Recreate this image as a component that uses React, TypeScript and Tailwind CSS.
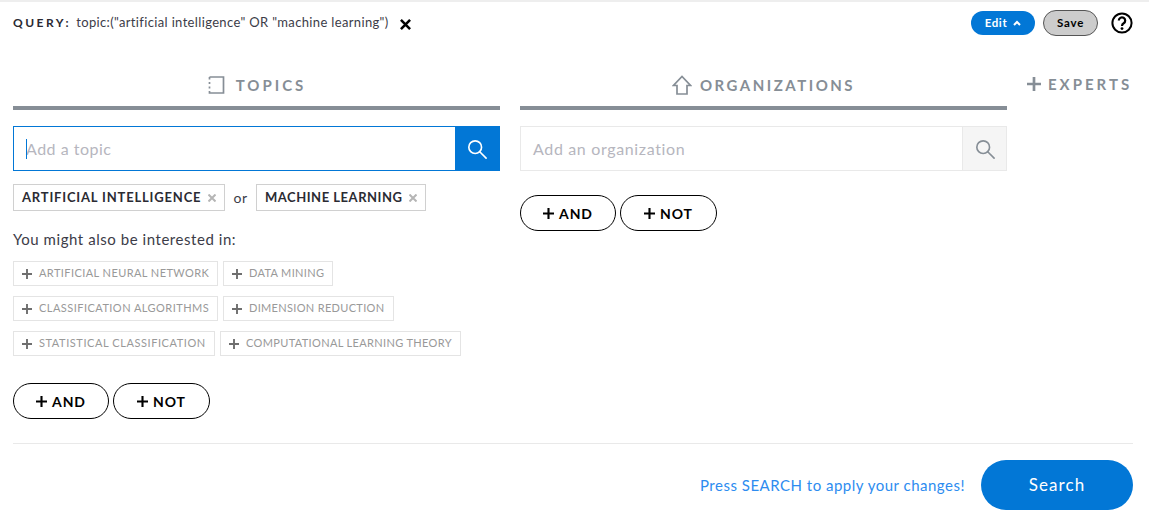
import React from "react";

const SearchIcon = ({ className }: { className: string }) => (
  <svg viewBox="0 0 22 22" className={className} fill="none" stroke="currentColor" strokeWidth="1.8">
    <circle cx="9" cy="9" r="7" />
    <path d="M14 14l7 7" strokeLinecap="round" />
  </svg>
);

const Plus = ({ className }: { className: string }) => (
  <svg viewBox="0 0 12 12" className={className} fill="none" stroke="currentColor" strokeWidth="2.3">
    <path d="M6 0v12M0 6h12" />
  </svg>
);

const Logic = ({ mt }: { mt: string }) => (
  <div className={`flex gap-1 ${mt}`}>
    {[["AND", "w-[96px]"], ["NOT", "w-[97px]"]].map(([t, w]) => (
      <button key={t} className={`${w} h-9 flex items-center justify-center gap-[5px] rounded-full border border-black text-[14px] font-bold tracking-[0.9px] text-black bg-white`}>
        <Plus className="w-[11px] h-[11px]" />
        {t}
      </button>
    ))}
  </div>
);

const Suggest = ({ label, w, track }: { label: string; w: string; track: string }) => (
  <span className={`${w} ${track} h-[25px] shrink-0 flex items-center border border-[#e4e4e4] pl-[8px] text-[11px] text-[#999] whitespace-nowrap`}>
    <Plus className="w-[10px] h-[10px] mr-[7px] text-[#6f6f6f] shrink-0" />
    {label}
  </span>
);

const Chip = ({ label, w, track }: { label: string; w: string; track: string }) => (
  <span className={`${w} ${track} h-[27px] flex items-center justify-between border border-[#d0d0d0] pl-2 pr-[8px] text-[13px] font-bold text-[#2b2b33] whitespace-nowrap`}>
    {label}
    <svg viewBox="0 0 8 8" className="w-2 h-2 text-[#b5b5b5]" fill="none" stroke="currentColor" strokeWidth="2">
      <path d="M0.5 0.5l7 7M7.500 0.5l-7 7" />
    </svg>
  </span>
);

export default function App() {
  return (
    <div className="w-[1149px] h-[524px] overflow-hidden bg-white border-t-2 border-[#eeeeee] pl-[13px] pr-[16px] font-['Lato','Source_Sans_Pro',sans-serif]">
      <div className="h-[42px] flex items-center justify-between">
        <div className="flex items-center">
          <span className="text-[12px] font-bold tracking-[2.5px] text-[#2a2a33] mr-[5px]">QUERY:</span>
          <span className="text-[13px] tracking-[0.35px] text-[#3c3c48] whitespace-nowrap">topic:("artificial intelligence" OR "machine learning")</span>
          <svg viewBox="0 0 12 12" className="w-[11px] h-[11px] ml-[11px] mt-[2px] text-black" fill="none" stroke="currentColor" strokeWidth="2.8">
            <path d="M1 1l10 10M11 1L1 11" />
          </svg>
        </div>
        <div className="flex items-center">
          <button className="w-[64px] h-6 rounded-full bg-[#0277d6] text-white text-[11.5px] font-bold tracking-[0.6px] flex items-center justify-center gap-[6px]">
            Edit
            <svg viewBox="0 0 8 6" className="w-2 h-[6px]" fill="none" stroke="currentColor" strokeWidth="2">
              <path d="M1 5l3-3 3 3" />
            </svg>
          </button>
          <button className="w-[55px] h-[26px] ml-2 rounded-full bg-[#cccccc] border border-[#555] text-black text-[11.5px] font-bold tracking-[0.8px]">
            Save
          </button>
          <svg viewBox="0 0 22 22" className="w-[22px] h-[22px] ml-[13px] text-black" fill="none" stroke="currentColor" strokeWidth="2">
            <circle cx="11" cy="11" r="9.6" />
            <path d="M7.8 8.6a3.2 3.2 0 1 1 4.9 2.7c-1.1.7-1.7 1.2-1.700 2.6" strokeWidth="2.2" />
            <circle cx="11" cy="16.6" r="1.4" fill="currentColor" stroke="none" />
          </svg>
        </div>
      </div>

      <div className="flex gap-5 mt-[25px]">
        <div className="w-[487px]">
          <div className="h-[41px] border-b-4 border-[#868e96] flex items-start justify-center">
            <div className="h-[32px] flex items-center gap-[11px] text-[#868e96]">
              <svg viewBox="0 0 18 18" className="w-[18px] h-[18px]" fill="none" stroke="currentColor" strokeWidth="1.7">
                <path d="M2.5 1h14v16h-14v-2M2.5 12.500v-2M2.500 8V6M2.500 3.500V1" />
              </svg>
              <span className="text-[15px] font-bold tracking-[3px]">TOPICS</span>
            </div>
          </div>

          <div className="flex h-[45px] mt-4 border border-[#0277d6]">
            <div className="flex-1 flex items-center pl-3 relative">
              <span className="absolute left-3 top-[12px] w-px h-[20px] bg-[#0277d6]" />
              <span className="text-[16px] tracking-[0.5px] text-[#b6b6be]">Add a topic</span>
            </div>
            <div className="w-[44px] bg-[#0277d6] flex items-center justify-center text-white">
              <SearchIcon className="w-[20px] h-[20px]" />
            </div>
          </div>

          <div className="flex items-center mt-[13px]">
            <Chip label="ARTIFICIAL INTELLIGENCE" w="w-[212px]" track="tracking-[0.82px]" />
            <span className="w-[31px] text-center text-[14px] tracking-[0.5px] text-[#3c3c48]">or</span>
            <Chip label="MACHINE LEARNING" w="w-[170px]" track="tracking-[0.52px]" />
          </div>

          <p className="mt-[16px] text-[15px] leading-[24px] tracking-[0.55px] text-[#3c3c48]">You might also be interested in:</p>

          <div className="flex flex-col gap-[10px] mt-[10px]">
            <div className="flex gap-[5px]">
              <Suggest label="ARTIFICIAL NEURAL NETWORK" w="w-[205px]" track="tracking-[0.42px]" />
              <Suggest label="DATA MINING" w="w-[110px]" track="tracking-[0.33px]" />
            </div>
            <div className="flex gap-[5px]">
              <Suggest label="CLASSIFICATION ALGORITHMS" w="w-[205px]" track="tracking-[0.46px]" />
              <Suggest label="DIMENSION REDUCTION" w="w-[171px]" track="tracking-[0.32px]" />
            </div>
            <div className="flex gap-[5px]">
              <Suggest label="STATISTICAL CLASSIFICATION" w="w-[202px]" track="tracking-[0.57px]" />
              <Suggest label="COMPUTATIONAL LEARNING THEORY" w="w-[241px]" track="tracking-[0.35px]" />
            </div>
          </div>

          <Logic mt="mt-[27px]" />
        </div>

        <div className="w-[487px]">
          <div className="h-[41px] border-b-4 border-[#868e96] flex items-start justify-center">
            <div className="h-[32px] flex items-center gap-[8px] text-[#868e96]">
              <svg viewBox="0 0 20 20" className="w-[20px] h-[20px]" fill="none" stroke="currentColor" strokeWidth="1.7">
                <path d="M5 19V10.500H1.500L10 1.500l8.500 9H15V19z" />
              </svg>
              <span className="text-[15px] font-bold tracking-[2.5px]">ORGANIZATIONS</span>
            </div>
          </div>

          <div className="flex h-[45px] mt-4 border border-[#e9e9e9]">
            <div className="flex-1 flex items-center pl-3">
              <span className="text-[16px] tracking-[0.65px] text-[#b6b6be]">Add an organization</span>
            </div>
            <div className="w-[44px] bg-[#f5f5f5] border-l border-[#e9e9e9] flex items-center justify-center text-[#868e96]">
              <SearchIcon className="w-[20px] h-[20px]" />
            </div>
          </div>

          <Logic mt="mt-6" />
        </div>

        <div className="flex-1">
          <div className="h-[32px] flex items-center gap-[7px] text-[#868e96] -mt-[1px]">
            <Plus className="w-[14px] h-[14px]" />
            <span className="text-[15px] font-bold tracking-[3px] whitespace-nowrap">EXPERTS</span>
          </div>
        </div>
      </div>

      <div className="border-t border-[#e9e9e9] mt-[24px] flex items-center justify-end pt-4">
        <span className="text-[15px] tracking-[0.5px] text-[#2d8cf0] mr-4">Press SEARCH to apply your changes!</span>
        <button className="w-[152px] h-[50px] rounded-full bg-[#0277d6] text-white text-[17px] tracking-[1.1px]">Search</button>
      </div>
    </div>
  );
}
